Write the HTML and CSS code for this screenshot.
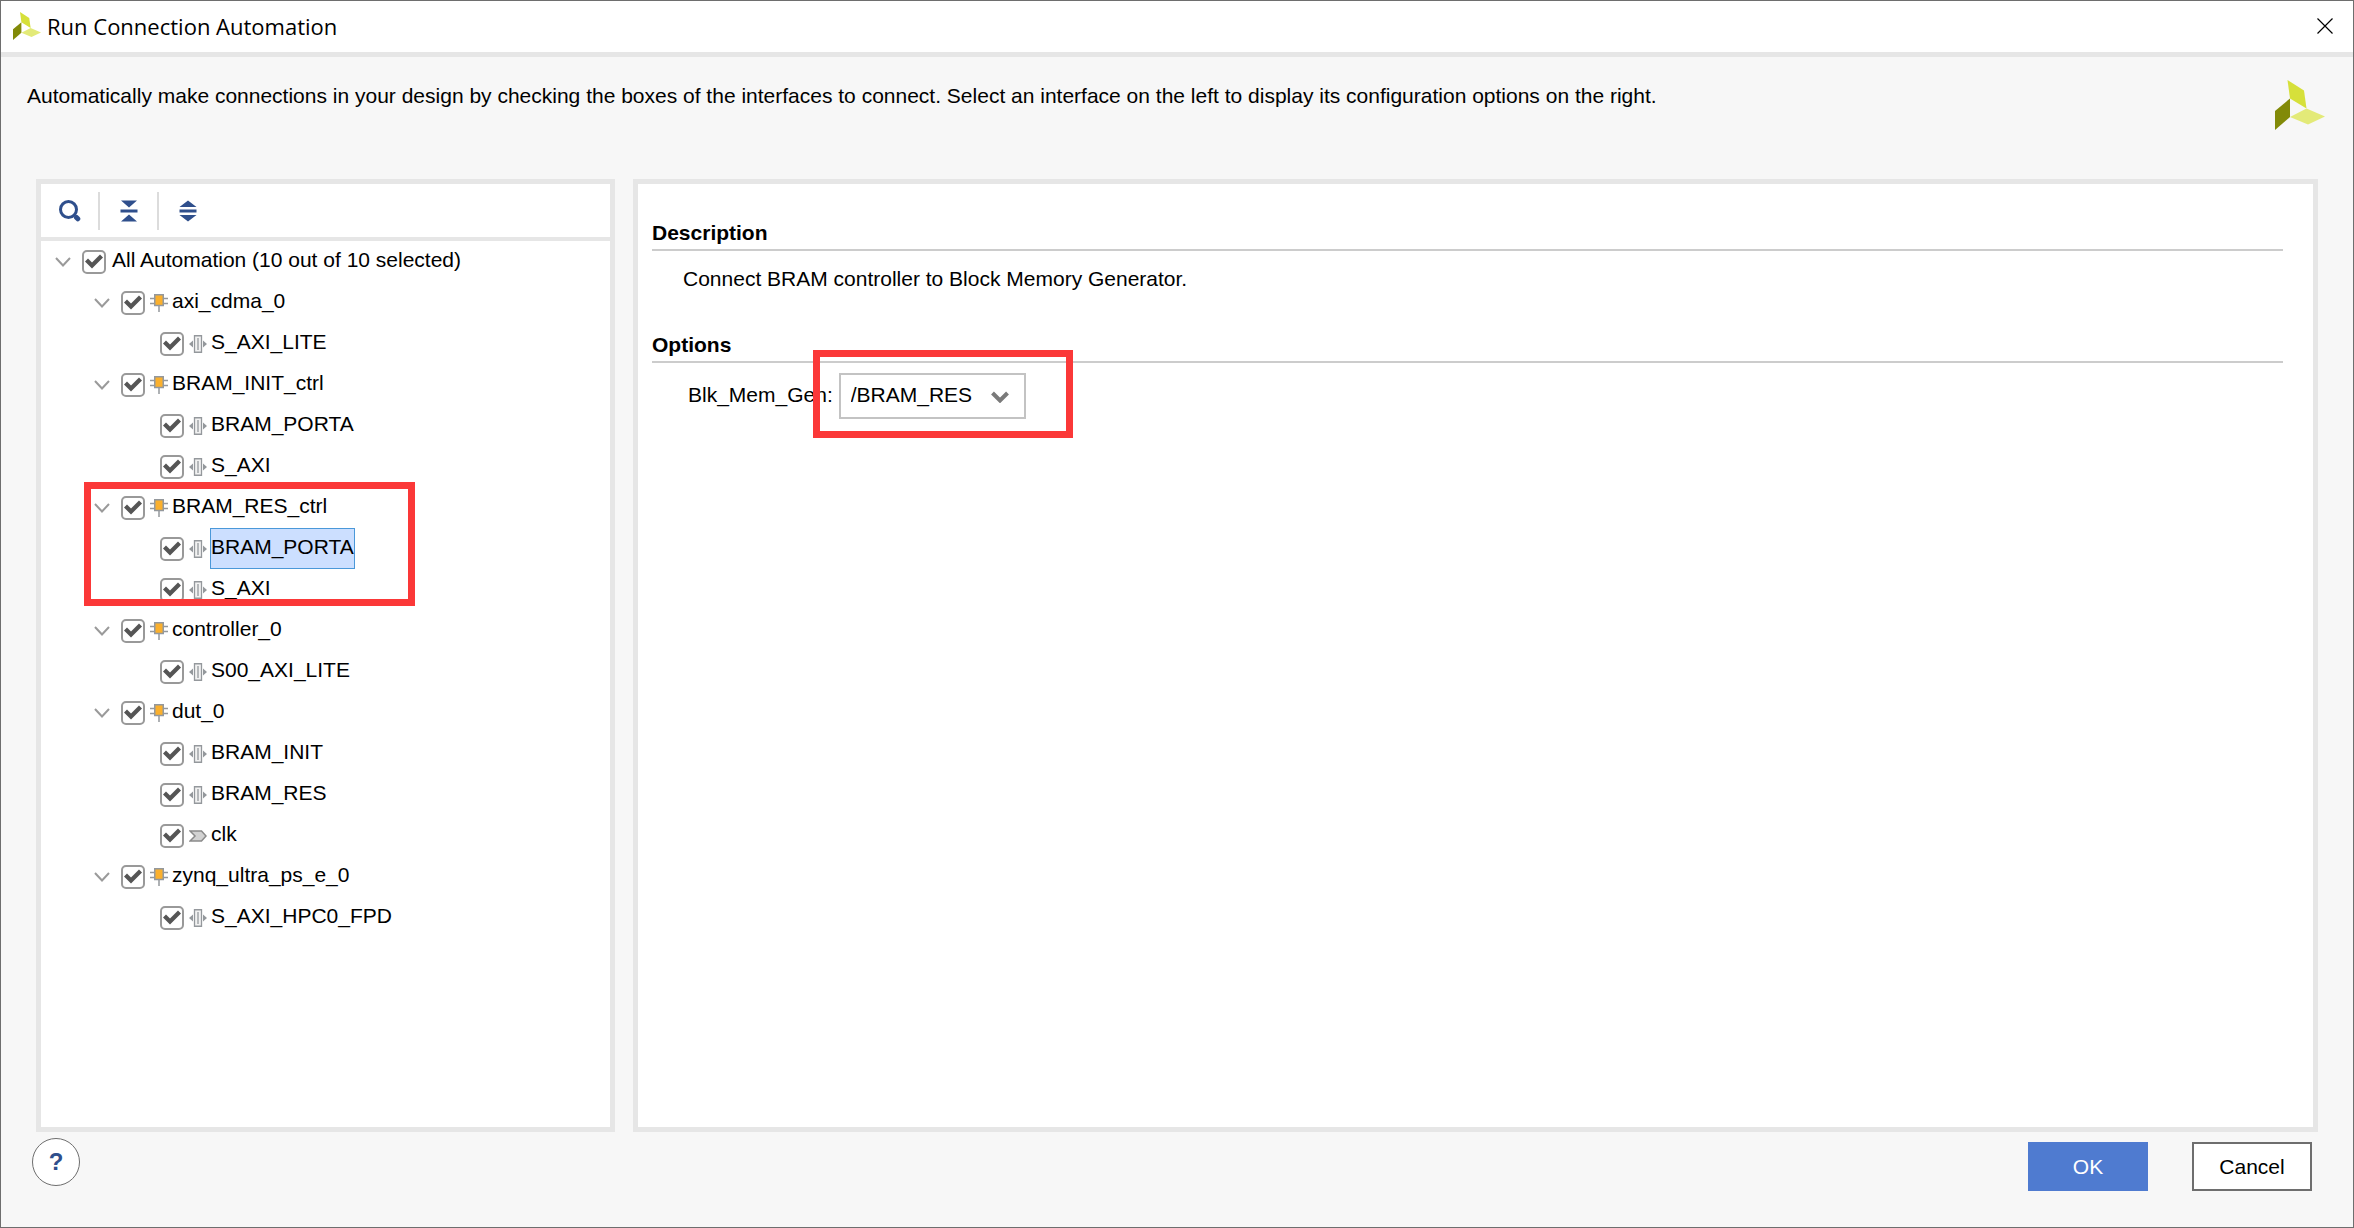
FILE: index.html
```html
<!DOCTYPE html>
<html lang="en">
<head>
<meta charset="utf-8">
<title>Run Connection Automation</title>
<link rel="stylesheet" href="styles.css">
</head>
<body>
<svg class="sprite" aria-hidden="true">
  <symbol id="logo" viewBox="0 0 50 50">
    <path fill="#d6e03a" d="M12.500 0 29 10.500 31.500 28.500 15 18.500Z"/>
    <path fill="#828a08" d="M0 31 15 18.500V37L0 50Z"/>
    <path fill="#e3ea78" d="M15 37 31.500 28.500 50 36.500 33 44.500Z"/>
  </symbol>
  <symbol id="chevron" viewBox="0 0 16 10"><path fill="none" stroke="#9a9a9a" stroke-width="2" d="M1 1 8 8.500 15 1"/></symbol>
  <symbol id="block" viewBox="0 0 18 18">
    <path fill="none" stroke="#94989c" stroke-width="1.500" d="M0 4.500H18M0 9.500H18M9 12V18"/>
    <path fill="#fbb02d" stroke="#94989c" stroke-width="1.500" d="M4.750 .75H13.250V11.500H4.750Z"/>
  </symbol>
  <symbol id="bus" viewBox="0 0 18 18">
    <path fill="#94989c" d="M0 9 4 5.500V12.500ZM18 9 14 5.500V12.500Z"/>
    <path fill="#f2f2f2" stroke="#94989c" stroke-width="1.300" d="M5.500 .75H12.500V17.250H5.500Z"/>
    <path stroke="#94989c" stroke-width="1.300" d="M9 3V15"/>
  </symbol>
  <symbol id="pin" viewBox="0 0 18 18"><path fill="#d2d2d2" stroke="#8a8a8a" stroke-width="1.500" d="M1 4H12.500L17 9 12.500 14H1L6 9Z"/></symbol>
</svg>

<div class="dialog">
  <header class="titlebar">
    <svg class="logo-small"><use href="#logo"/></svg>
    <h1>Run Connection Automation</h1>
    <button class="close" type="button" aria-label="Close">
      <svg viewBox="0 0 16 16"><path fill="none" stroke="#000" stroke-width="1.200" d="M.5 .5 15.500 15.500M15.500 .5 .5 15.500"/></svg>
    </button>
  </header>

  <div class="intro">
    <p>Automatically make connections in your design by checking the boxes of the interfaces to connect. Select an interface on the left to display its configuration options on the right.</p>
    <svg class="logo-large"><use href="#logo"/></svg>
  </div>

  <main class="panels">
    <section class="panel tree-panel">
      <div class="toolbar">
        <button type="button" aria-label="Search"><svg viewBox="0 0 22 22"><circle cx="9.500" cy="9.500" r="8" fill="none" stroke="#2f4f8c" stroke-width="3"/><path stroke="#2f4f8c" stroke-width="5" stroke-linecap="round" d="M17.500 17.500 18.800 18.800"/></svg></button>
        <button type="button" aria-label="Collapse all"><svg viewBox="0 0 22 22"><path fill="#2f4f8c" d="M3 .5H19L11 7.500ZM2.500 9.500H19.500V12.500H2.500ZM3 21.500H19L11 14.500Z"/></svg></button>
        <button type="button" aria-label="Expand all"><svg viewBox="0 0 22 22"><path fill="#2f4f8c" d="M2.500 7 11 .5 19.500 7ZM2.500 9.500H19.500V12.500H2.500ZM2.500 15H19.500L11 21.500Z"/></svg></button>
      </div>
      <ul class="tree">
        <li>
          <div class="row"><svg class="chevron"><use href="#chevron"/></svg><label><input type="checkbox" checked><span class="name">All Automation (10 out of 10 selected)</span></label></div>
          <ul>
            <li>
              <div class="row"><svg class="chevron"><use href="#chevron"/></svg><label><input type="checkbox" checked><svg class="kind"><use href="#block"/></svg><span class="name">axi_cdma_0</span></label></div>
              <ul>
                <li><div class="row leaf"><label><input type="checkbox" checked><svg class="kind"><use href="#bus"/></svg><span class="name">S_AXI_LITE</span></label></div></li>
              </ul>
            </li>
            <li>
              <div class="row"><svg class="chevron"><use href="#chevron"/></svg><label><input type="checkbox" checked><svg class="kind"><use href="#block"/></svg><span class="name">BRAM_INIT_ctrl</span></label></div>
              <ul>
                <li><div class="row leaf"><label><input type="checkbox" checked><svg class="kind"><use href="#bus"/></svg><span class="name">BRAM_PORTA</span></label></div></li>
                <li><div class="row leaf"><label><input type="checkbox" checked><svg class="kind"><use href="#bus"/></svg><span class="name">S_AXI</span></label></div></li>
              </ul>
            </li>
            <li class="marked">
              <div class="row"><svg class="chevron"><use href="#chevron"/></svg><label><input type="checkbox" checked><svg class="kind"><use href="#block"/></svg><span class="name">BRAM_RES_ctrl</span></label></div>
              <ul>
                <li><div class="row leaf"><label><input type="checkbox" checked><svg class="kind"><use href="#bus"/></svg><span class="name selected">BRAM_PORTA</span></label></div></li>
                <li><div class="row leaf"><label><input type="checkbox" checked><svg class="kind"><use href="#bus"/></svg><span class="name">S_AXI</span></label></div></li>
              </ul>
            </li>
            <li>
              <div class="row"><svg class="chevron"><use href="#chevron"/></svg><label><input type="checkbox" checked><svg class="kind"><use href="#block"/></svg><span class="name">controller_0</span></label></div>
              <ul>
                <li><div class="row leaf"><label><input type="checkbox" checked><svg class="kind"><use href="#bus"/></svg><span class="name">S00_AXI_LITE</span></label></div></li>
              </ul>
            </li>
            <li>
              <div class="row"><svg class="chevron"><use href="#chevron"/></svg><label><input type="checkbox" checked><svg class="kind"><use href="#block"/></svg><span class="name">dut_0</span></label></div>
              <ul>
                <li><div class="row leaf"><label><input type="checkbox" checked><svg class="kind"><use href="#bus"/></svg><span class="name">BRAM_INIT</span></label></div></li>
                <li><div class="row leaf"><label><input type="checkbox" checked><svg class="kind"><use href="#bus"/></svg><span class="name">BRAM_RES</span></label></div></li>
                <li><div class="row leaf"><label><input type="checkbox" checked><svg class="kind"><use href="#pin"/></svg><span class="name">clk</span></label></div></li>
              </ul>
            </li>
            <li>
              <div class="row"><svg class="chevron"><use href="#chevron"/></svg><label><input type="checkbox" checked><svg class="kind"><use href="#block"/></svg><span class="name">zynq_ultra_ps_e_0</span></label></div>
              <ul>
                <li><div class="row leaf"><label><input type="checkbox" checked><svg class="kind"><use href="#bus"/></svg><span class="name">S_AXI_HPC0_FPD</span></label></div></li>
              </ul>
            </li>
          </ul>
        </li>
      </ul>
    </section>

    <section class="panel detail-panel">
      <h2>Description</h2>
      <p class="description">Connect BRAM controller to Block Memory Generator.</p>
      <h2>Options</h2>
      <div class="option">
        <label for="blk-mem-gen">Blk_Mem_Gen:</label>
        <div class="select">
          <select id="blk-mem-gen"><option>/BRAM_RES</option></select>
          <svg viewBox="0 0 18 12"><path fill="none" stroke="#7a7a7a" stroke-width="4" d="M1.500 2 9 9.500 16.500 2"/></svg>
        </div>
      </div>
    </section>
  </main>

  <footer class="actions">
    <button class="help" type="button" aria-label="Help">?</button>
    <button class="button primary" type="button">OK</button>
    <button class="button" type="button">Cancel</button>
  </footer>
</div>
</body>
</html>
```
FILE: styles.css
```css
*,
*::before,
*::after {
  box-sizing: border-box;
}

body {
  margin: 0;
  background: #f7f7f7;
  color: #000;
  font: 21px/24px "Liberation Sans", Arial, sans-serif;
}

h1,
h2,
p,
ul {
  margin: 0;
  padding: 0;
}

ul {
  list-style: none;
}

button,
select {
  margin: 0;
  padding: 0;
  border: 0;
  background: none;
  color: inherit;
  font: inherit;
}

svg {
  display: block;
  flex: none;
}

.sprite {
  position: absolute;
  width: 0;
  height: 0;
}

.dialog {
  display: flex;
  flex-direction: column;
  min-height: 100vh;
  border: 1px solid #6e6e6e;
}

.titlebar {
  display: flex;
  align-items: center;
  gap: 6px;
  height: 56px;
  padding: 0 20px 2px 12px;
  border-bottom: 5px solid #e6e6e6;
  background: #fff;
}

.titlebar h1 {
  flex: 1;
  font: 400 22px/28px "Open Sans", "Segoe UI", sans-serif;
}

.logo-small {
  width: 28px;
  height: 28px;
}

.close svg {
  width: 16px;
  height: 16px;
}

.intro {
  display: flex;
  justify-content: space-between;
  gap: 24px;
  height: 122px;
  padding: 23px 28px 0 26px;
}

.intro p {
  padding-top: 4px;
}

.logo-large {
  width: 50px;
  height: 50px;
}

.panels {
  display: flex;
  flex: 1;
  gap: 18px;
  padding: 0 35px;
}

.panel {
  border: 5px solid #e6e6e6;
  background: #fff;
}

.tree-panel {
  flex: none;
  width: 579px;
}

.toolbar {
  display: flex;
  align-items: center;
  height: 57px;
  border-bottom: 4px solid #e6e6e6;
}

.toolbar button {
  display: grid;
  place-items: center;
  width: 57px;
  height: 38px;
}

.toolbar button + button {
  width: 59px;
  border-left: 2px solid #dcdcdc;
}

.toolbar svg {
  width: 22px;
  height: 22px;
}

.tree {
  padding-left: 14px;
}

.tree ul {
  padding-left: 39px;
}

.row,
.row label {
  display: flex;
  align-items: center;
  height: 41px;
}

.chevron {
  width: 16px;
  height: 10px;
  margin-right: 11px;
}

.leaf {
  padding-left: 27px;
}

.kind {
  width: 18px;
  height: 18px;
  margin: 0 3px 0 5px;
}

input[type="checkbox"] {
  appearance: none;
  flex: none;
  width: 24px;
  height: 24px;
  margin: 0;
  border: 2px solid #999;
  border-radius: 5px;
  background: #fff;
}

input[type="checkbox"]:checked::before {
  content: "";
  display: block;
  width: 20px;
  height: 20px;
  background: #555;
  clip-path: polygon(1px 10px, 4px 7px, 8px 11px, 16px 3px, 19px 6px, 8px 17px);
}

.name {
  height: 41px;
  padding: 0 3px 0 1px;
  line-height: 38px;
  white-space: nowrap;
}

input + .name {
  padding-left: 6px;
}

.selected {
  padding: 0;
  border: 1px solid #4a98d9;
  background: #ccdfff;
  line-height: 36px;
}

.marked {
  position: relative;
}

.marked::after {
  content: "";
  position: absolute;
  top: -5px;
  left: -10px;
  width: 331px;
  height: 124px;
  border: 7px solid #fb3838;
  pointer-events: none;
}

.detail-panel {
  flex: 1;
  padding: 36px 30px 0 14px;
}

.detail-panel h2 {
  height: 31px;
  border-bottom: 2px solid #ccc;
  font-size: 21px;
  line-height: 26px;
}

.description {
  padding: 16px 0 41px 31px;
}

.option {
  display: flex;
  align-items: center;
  gap: 6px;
  padding: 10px 0 0 36px;
}

.option label {
  padding-bottom: 2px;
}

.select {
  position: relative;
}

.select select {
  appearance: none;
  display: block;
  width: 187px;
  height: 46px;
  padding: 0 40px 2px 10px;
  border: 2px solid #c3c3c3;
  background: #fff;
}

.select svg {
  position: absolute;
  top: 18px;
  right: 17px;
  width: 18px;
  height: 12px;
  pointer-events: none;
}

.select::after {
  content: "";
  position: absolute;
  top: -23px;
  left: -26px;
  width: 260px;
  height: 88px;
  border: 7px solid #fb3838;
  pointer-events: none;
}

.actions {
  display: flex;
  align-items: flex-start;
  gap: 44px;
  height: 95px;
  padding: 10px 41px 0 31px;
}

.help {
  width: 48px;
  height: 48px;
  margin: -4px auto 0 0;
  border: 1px solid #6e6e6e;
  border-radius: 50%;
  background: #fff;
  color: #2f4f8c;
  font-size: 24px;
  font-weight: 700;
}

.button {
  width: 120px;
  height: 49px;
  border: 2px solid #6e6e6e;
  background: #fff;
}

.primary {
  border-color: #4f7bd0;
  background: #4f7bd0;
  color: #fff;
}
```
